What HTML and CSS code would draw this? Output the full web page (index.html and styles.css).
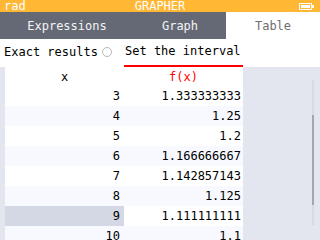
FILE: index.html
```html
<!DOCTYPE html>
<html lang="en">
<head>
  <meta charset="UTF-8" />
  <title>Grapher</title>
  <link rel="stylesheet" href="styles.css">
</head>
<body>
  <header class="status-bar">
    <span class="angle">rad</span>
    <span class="app-title">GRAPHER</span>
    <span class="battery">
      <svg width="16" height="7" viewBox="0 0 16 7">
        <rect x="0.5" y="0.5" width="12" height="6" fill="none" stroke="#fff" stroke-width="1"/>
        <rect x="2" y="2" width="9" height="3" fill="#fff"/>
        <rect x="13" y="2" width="2" height="3" fill="#fff"/>
      </svg>
    </span>
  </header>

  <nav class="tabs">
    <div class="tab tab-expr">Expressions</div>
    <div class="tab tab-graph">Graph</div>
    <div class="tab tab-table active">Table</div>
  </nav>

  <div class="options">
    <div class="opt opt-exact">Exact results <span class="radio"></span></div>
    <div class="opt opt-interval">Set the interval</div>
    <div class="opt-rest"></div>
  </div>

  <div class="content">
    <div class="strip"></div>
    <div class="values">
      <div class="row head"><div class="cell col-x">x</div><div class="cell col-f">f(x)</div></div>
      <div class="row"><div class="cell num">3</div><div class="cell num">1.333333333</div></div>
      <div class="row alt"><div class="cell num">4</div><div class="cell num">1.25</div></div>
      <div class="row"><div class="cell num">5</div><div class="cell num">1.2</div></div>
      <div class="row alt"><div class="cell num">6</div><div class="cell num">1.166666667</div></div>
      <div class="row"><div class="cell num">7</div><div class="cell num">1.142857143</div></div>
      <div class="row alt"><div class="cell num">8</div><div class="cell num">1.125</div></div>
      <div class="row"><div class="cell num selected">9</div><div class="cell num">1.111111111</div></div>
      <div class="row alt"><div class="cell num">10</div><div class="cell num">1.1</div></div>
    </div>
    <div class="side">
      <div class="scroll-track"><div class="scroll-thumb"></div></div>
    </div>
  </div>
</body>
</html>
```

FILE: styles.css
```css
body {
  margin: 0;
  width: 320px;
  height: 240px;
  overflow: hidden;
  font-family: "DejaVu Sans Mono", monospace;
  font-size: 12px;
  color: #000;
  background: #fff;
}

.status-bar {
  height: 12px;
  background: #ffb734;
  color: #fff;
  display: grid;
  grid-template-columns: 1fr auto 1fr;
  align-items: center;
  padding: 0 4px;
  font-size: 12px;
  line-height: 12px;
}
.status-bar .battery {
  justify-self: end;
  display: flex;
  padding-right: 1px;
}

.tabs {
  height: 27px;
  display: flex;
  background: #656975;
}
.tab {
  display: flex;
  align-items: center;
  justify-content: center;
  color: #f4f4f4;
  font-size: 12px;
}
.tab-expr { width: 134px; }
.tab-graph { width: 92px; }
.tab-table { flex: 1; }
.tab.active {
  background: #fff;
  color: #6e6e6e;
}

.options {
  height: 28px;
  display: flex;
}
.opt {
  display: flex;
  align-items: center;
  box-sizing: border-box;
  height: 26px;
}
.opt-exact {
  width: 124px;
  padding-left: 4px;
}
.radio {
  display: inline-block;
  width: 8px;
  height: 8px;
  border: 1px solid #b8b8b8;
  border-radius: 50%;
  margin-left: 4px;
}
.opt-interval {
  width: 119px;
  height: 28px;
  padding-left: 1px;
  padding-bottom: 2px;
  border-bottom: 2px solid #f00;
}
.opt-rest { flex: 1; }

.content {
  display: flex;
  height: 173px;
}
.strip {
  width: 5px;
  background: #e4e6ef;
}
.values {
  width: 238px;
}
.row {
  display: flex;
  height: 20px;
}
.row.head {
  height: 19px;
}
.row.alt {
  background: #f7f9ff;
}
.cell {
  width: 119px;
  box-sizing: border-box;
  display: flex;
  align-items: center;
}
.col-x, .col-f {
  justify-content: center;
}
.col-f {
  color: #f00;
}
.num {
  justify-content: flex-end;
  padding-right: 4px;
}
.row .num:last-child {
  padding-right: 2px;
}
.selected {
  background: #d4d7e4;
}

.side {
  flex: 1;
  background: #e4e6ef;
  display: flex;
  justify-content: flex-end;
  padding: 13px 6px 0 0;
}
.scroll-track {
  width: 2px;
  height: 145px;
  background: #d8dae2;
}
.scroll-thumb {
  margin-top: 35px;
  height: 90px;
  background: #a4a6ae;
}
```
